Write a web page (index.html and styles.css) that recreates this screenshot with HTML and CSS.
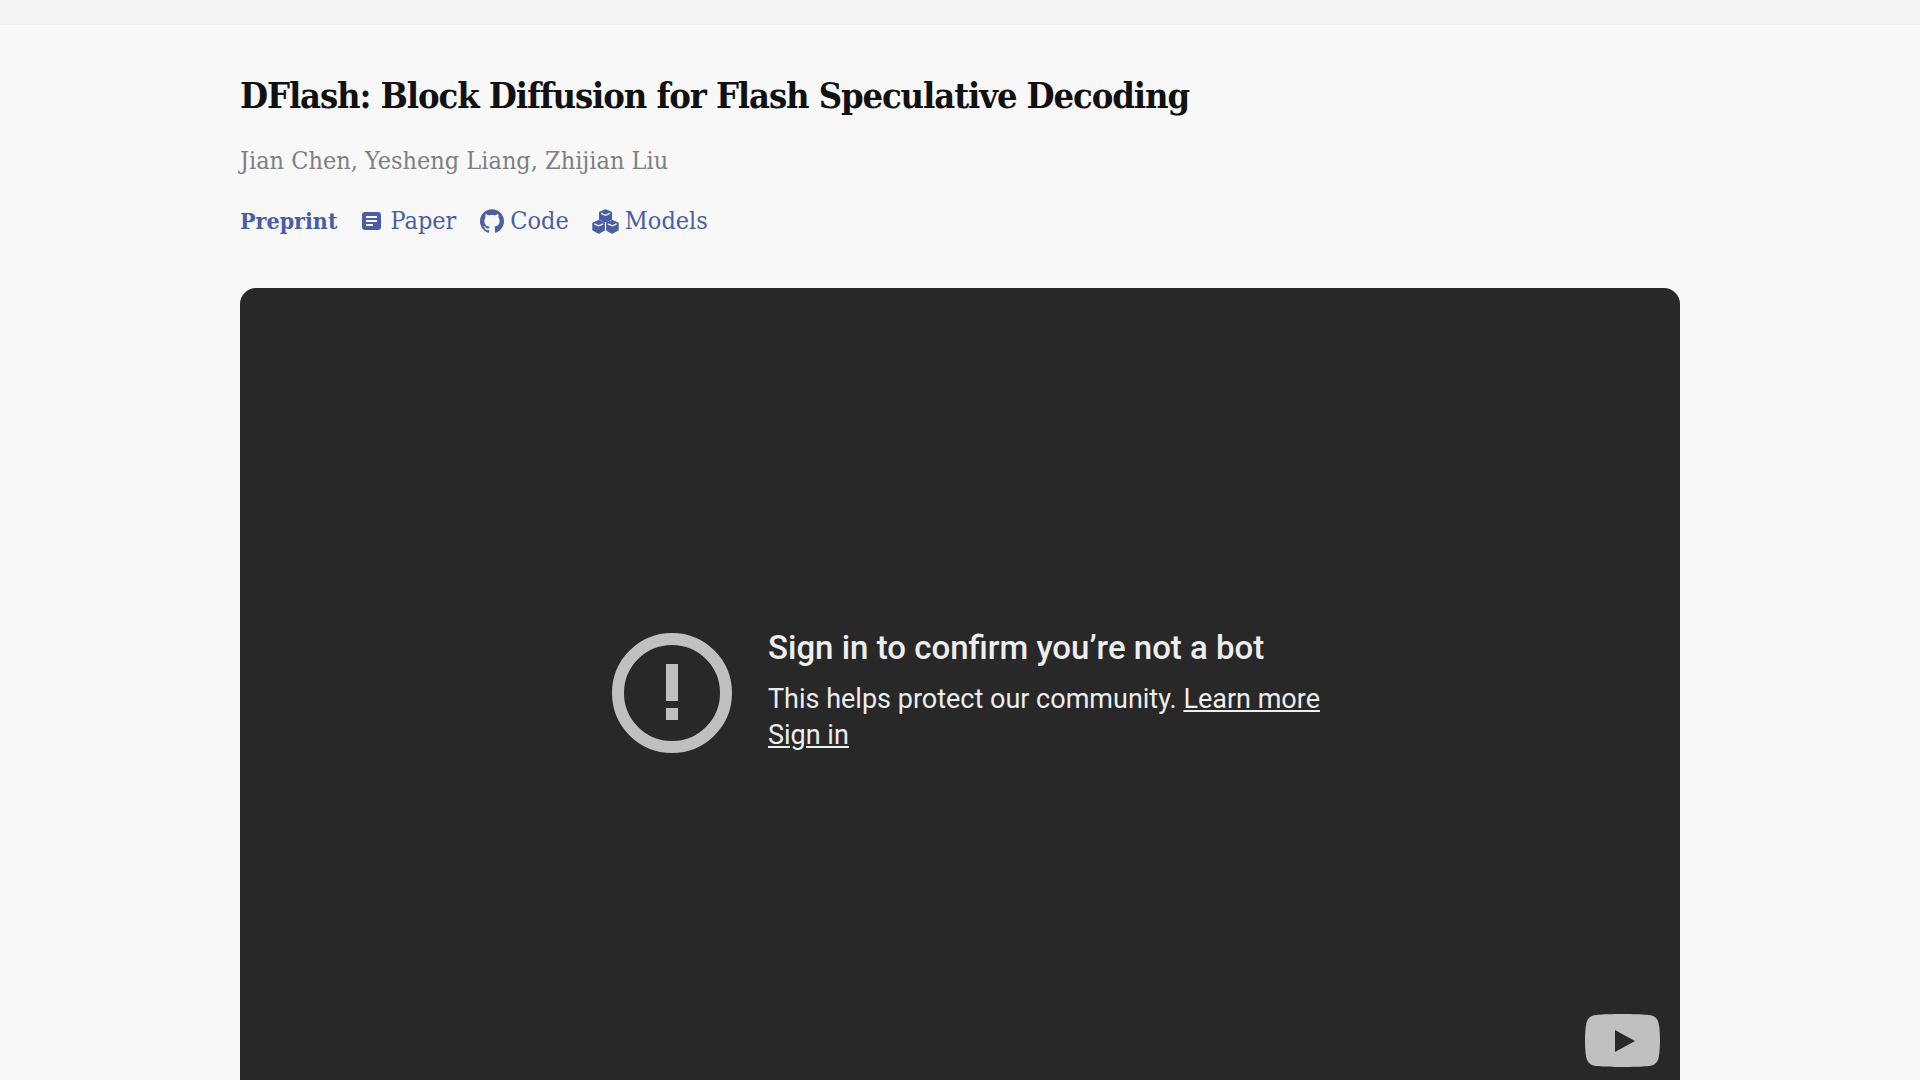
FILE: index.html
```html
<!DOCTYPE html>
<html lang="en">
<head>
  <meta charset="UTF-8">
  <meta name="viewport" content="width=device-width, initial-scale=1.0">
  <title>DFlash: Block Diffusion for Flash Speculative Decoding</title>
  <link rel="stylesheet" href="styles.css">
</head>
<body>
  <div class="topbar"></div>
  <div class="container">
    <h1 class="title">DFlash: Block Diffusion for Flash Speculative Decoding</h1>
    <p class="authors">Jian Chen, Yesheng Liang, Zhijian Liu</p>
    <div class="links">
      <span class="venue">Preprint</span>
      <a class="link link-paper" href="#">
        <svg class="icon icon-paper" viewBox="0 0 20 20"><rect x="0" y="1" width="19" height="18" rx="3" fill="currentColor"/><path d="M4 6h11M4 10h11M4 14h7" stroke="#f8f8f8" stroke-width="1.8"/></svg>
        Paper
      </a>
      <a class="link link-code" href="#">
        <svg class="icon" viewBox="0 0 24 24"><path fill="currentColor" d="M12 .297c-6.63 0-12 5.373-12 12 0 5.303 3.438 9.8 8.205 11.385.6.113.82-.258.82-.577 0-.285-.01-1.04-.015-2.04-3.338.724-4.042-1.61-4.042-1.61C4.422 18.07 3.633 17.7 3.633 17.7c-1.087-.744.084-.729.084-.729 1.205.084 1.838 1.236 1.838 1.236 1.07 1.835 2.809 1.305 3.495.998.108-.776.417-1.305.76-1.605-2.665-.3-5.466-1.332-5.466-5.93 0-1.31.465-2.38 1.235-3.22-.135-.303-.54-1.523.105-3.176 0 0 1.005-.322 3.3 1.23.96-.267 1.98-.399 3-.405 1.02.006 2.04.138 3 .405 2.28-1.552 3.285-1.23 3.285-1.23.645 1.653.24 2.873.12 3.176.765.84 1.23 1.91 1.23 3.22 0 4.61-2.805 5.625-5.475 5.92.42.36.81 1.096.81 2.22 0 1.606-.015 2.896-.015 3.286 0 .315.21.69.825.57C20.565 22.092 24 17.592 24 12.297c0-6.627-5.373-12-12-12"/></svg>
        Code
      </a>
      <a class="link link-models" href="#">
        <svg class="icon icon-cubes" viewBox="0 0 28 26">
          <g fill="currentColor" stroke="currentColor" stroke-width="1.500" stroke-linejoin="round">
            <path d="M14 1l6 2.600v7L14 13.500l-6-2.900v-7z"/>
            <path d="M7 12l6 2.600v7L7 25l-6-3.400v-7z"/>
            <path d="M21 12l6 2.600v7L21 25l-6-3.400v-7z"/>
          </g>
          <path d="M9.500 4.500l4.500 2 4.500-2M2.500 15.500l4.500 2 4.500-2M16.500 15.500l4.500 2 4.500-2M14 13.500v9" fill="none" stroke="#f8f8f8" stroke-width="1.300"/>
        </svg>
        Models
      </a>
    </div>

    <div class="video">
      <div class="error">
        <svg class="error-icon" viewBox="0 0 120 120">
          <circle cx="60" cy="60" r="54" fill="none" stroke="currentColor" stroke-width="12"/>
          <rect x="54" y="31" width="12" height="37" fill="currentColor"/>
          <rect x="54" y="75" width="12" height="12" fill="currentColor"/>
        </svg>
        <div class="error-text">
          <div class="error-title">Sign in to confirm you’re not a bot</div>
          <div class="error-sub">This helps protect our community. <a href="#">Learn more</a></div>
          <div class="error-sub"><a href="#">Sign in</a></div>
        </div>
      </div>
      <svg class="yt-logo" viewBox="0 0 75 53">
        <path fill="#c0c0c0" d="M73.400 8.300C72.500 5 70 2.400 66.800 1.500 61 0 37.500 0 37.500 0S14 0 8.200 1.500C5 2.400 2.500 5 1.600 8.300 0 14 0 26.500 0 26.500S0 39 1.600 44.700C2.500 48 5 50.600 8.200 51.500 14 53 37.500 53 37.500 53S61 53 66.800 51.500C70 50.600 72.500 48 73.400 44.700 75 39 75 26.500 75 26.500S75 14 73.400 8.300z"/>
        <path d="M30 16l20 11-20 11z" fill="#282828"/>
      </svg>
    </div>
  </div>
</body>
</html>
```

FILE: styles.css
```css
html {
  overflow: hidden;
}
body {
  margin: 0;
  background-color: #f8f8f8;
  font-family: "DejaVu Serif", "Liberation Serif", serif;
}
.topbar {
  height: 24px;
  background-color: #f3f4f6;
  border-bottom: 1px solid #eeeeef;
}
.container {
  width: 1440px;
  margin: 0 auto;
}
.title {
  margin: 0;
  padding-top: 49px;
  font-size: 36px;
  line-height: 42px;
  letter-spacing: -1.1px;
  font-weight: 700;
  font-stretch: condensed;
  color: #111;
}
.authors {
  margin: 30px 0 0;
  font-size: 25px;
  line-height: 30px;
  font-stretch: condensed;
  color: #808080;
}
.links {
  display: flex;
  align-items: center;
  margin-top: 30px;
  font-size: 25px;
  line-height: 30px;
  font-stretch: condensed;
  color: #4a5ea5;
}
.venue {
  font-size: 23px;
  font-weight: 700;
  margin-right: 25px;
}
.link {
  display: flex;
  align-items: center;
  gap: 8px;
  color: inherit;
  text-decoration: none;
  margin-right: 24px;
}
.link-code {
  gap: 6px;
  margin-right: 23px;
}
.link-models {
  gap: 6px;
}
.icon {
  width: 24px;
  height: 24px;
}
.icon-paper {
  width: 20px;
  height: 20px;
}
.icon-cubes {
  width: 27px;
  height: 25px;
}
.video {
  position: relative;
  display: flex;
  align-items: center;
  justify-content: center;
  height: 810px;
  margin-top: 52px;
  border-radius: 16px;
  background-color: #282828;
  font-family: Roboto, "Liberation Sans", sans-serif;
  color: #eee;
}
.error {
  display: flex;
  align-items: center;
  gap: 36px;
  padding-left: 12px;
}
.error-icon {
  width: 120px;
  height: 120px;
  color: #c0c0c0;
}
.error-text {
  width: 552px;
  padding-bottom: 5px;
}
.error-title {
  font-size: 33px;
  line-height: 40px;
  font-weight: 500;
  margin-bottom: 13px;
}
.error-sub {
  font-size: 27px;
  line-height: 36.500px;
}
.error-sub a {
  color: inherit;
}
.yt-logo {
  position: absolute;
  right: 20px;
  bottom: 31px;
  width: 75px;
  height: 53px;
}
```
